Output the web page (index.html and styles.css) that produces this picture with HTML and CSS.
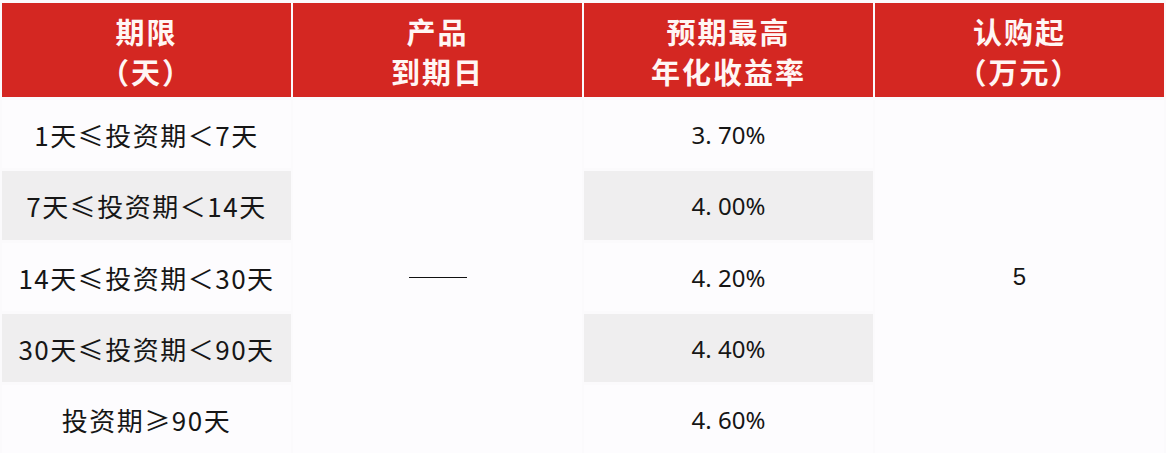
FILE: index.html
```html
<!DOCTYPE html>
<html lang="zh-CN">
<head>
<meta charset="utf-8">
<link rel="stylesheet" href="styles.css">
</head>
<body>
<div class="table">
  <div class="cell head c1">期限<br>（天）</div>
  <div class="cell head c2">产品<br>到期日</div>
  <div class="cell head c3">预期最高<br>年化收益率</div>
  <div class="cell head c4">认购起<br>（万元）</div>

  <div class="cell c1 r1 term">1天≤投资期＜7天</div>
  <div class="cell c1 r2 gray term">7天≤投资期＜14天</div>
  <div class="cell c1 r3 term">14天≤投资期＜30天</div>
  <div class="cell c1 r4 gray term">30天≤投资期＜90天</div>
  <div class="cell c1 r5 term">投资期≥90天</div>

  <div class="cell c2 span"><span class="dash"></span></div>

  <div class="cell c3 r1 num">3. 70%</div>
  <div class="cell c3 r2 gray num">4. 00%</div>
  <div class="cell c3 r3 num">4. 20%</div>
  <div class="cell c3 r4 gray num">4. 40%</div>
  <div class="cell c3 r5 num">4. 60%</div>

  <div class="cell c4 span five">5</div>
</div>
</body>
</html>
```
FILE: styles.css
```css
html, body {
  margin: 0;
  padding: 0;
  background: #fbfafc;
}
body {
  width: 1166px;
  height: 453px;
  overflow: hidden;
  font-family: "Noto Sans CJK SC", "Noto Sans", sans-serif;
  color: #161616;
}
.table {
  display: grid;
  grid-template-columns: 289px 289px 289px 289px;
  grid-template-rows: 94px 68px 69px 68px 68px 68px;
  column-gap: 2px;
  row-gap: 3px;
  padding: 3px 2px 0 2px;
}
.cell {
  display: flex;
  align-items: center;
  justify-content: center;
  text-align: center;
  background: #fdfcfe;
  font-size: 23px;
  white-space: nowrap;
}
.head {
  background: #d42722;
  color: #fff6f4;
  font-weight: bold;
  font-size: 29px;
  line-height: 40px;
  letter-spacing: 2px;
  padding-top: 2px;
}
.term {
  font-size: 26px;
  letter-spacing: 1.5px;
}
.gray { background: #efeeef; }
.c1 { grid-column: 1; }
.c2 { grid-column: 2; }
.c3 { grid-column: 3; }
.c4 { grid-column: 4; }
.r1 { grid-row: 2; }
.r2 { grid-row: 3; }
.r3 { grid-row: 4; }
.r4 { grid-row: 5; }
.r5 { grid-row: 6; }
.span { grid-row: 2 / 7; }
.num {
  font-family: "Noto Sans", "Noto Sans CJK SC", sans-serif;
  font-size: 24px;
}
.five {
  font-family: "Liberation Sans", Arial, sans-serif;
  font-size: 24px;
}
.dash {
  display: block;
  width: 58px;
  height: 0;
  border-top: 1.5px solid #111;
  margin-top: 2px;
}
```
